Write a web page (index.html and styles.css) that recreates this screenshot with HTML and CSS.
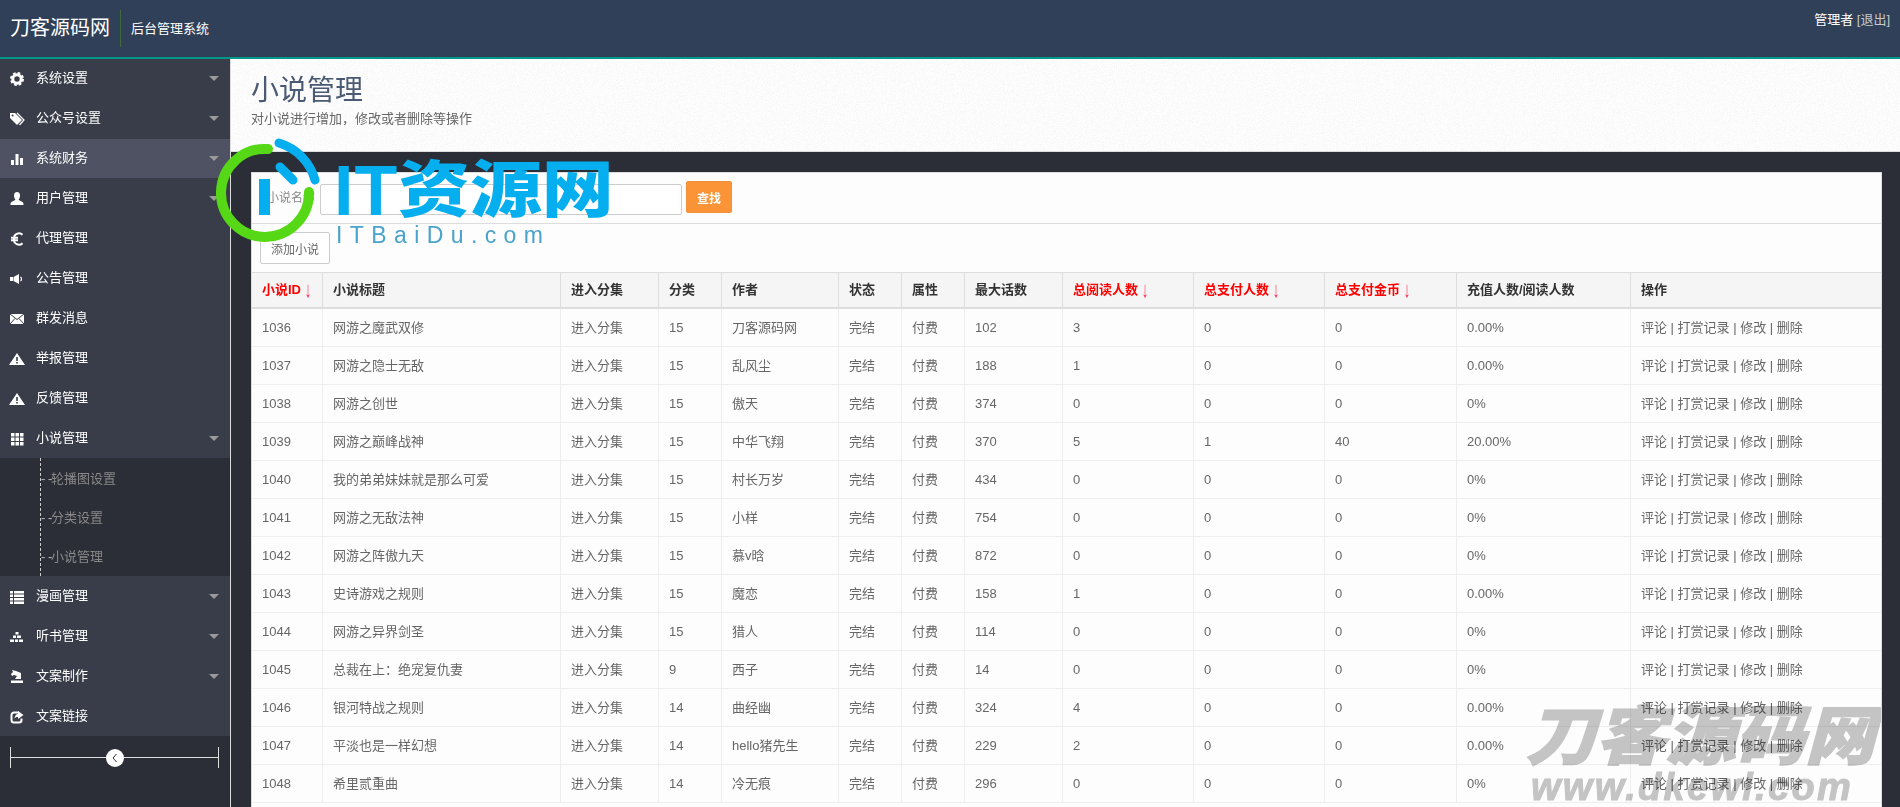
FILE: index.html
```html
<!DOCTYPE html>
<html lang="zh-CN">
<head>
<meta charset="utf-8">
<title>小说管理</title>
<link rel="stylesheet" href="styles.css">
</head>
<body>
<header class="topbar">
  <div class="brand">刀客源码网</div>
  <div class="system">后台管理系统</div>
  <div class="account">管理者 <a class="logout">[退出]</a></div>
</header>
<div class="layout">
  <aside class="sidebar">
    <nav>
      <a class="item"><svg class="ico" viewBox="0 0 14 14"><circle cx="7" cy="7" r="4.2" fill="none" stroke="#fff" stroke-width="3"/><circle cx="7" cy="7" r="6" fill="none" stroke="#fff" stroke-width="2" stroke-dasharray="2.7 2"/></svg><span>系统设置</span><i class="caret"></i></a>
      <a class="item"><svg class="ico" viewBox="0 0 14 14"><path d="M0 1h5l7 7-5 5-7-7z" fill="#fff"/><circle cx="2.6" cy="3.4" r="1" fill="#393c49"/><path d="M7 1l7 7-4.500 5" fill="none" stroke="#fff" stroke-width="1.200"/></svg><span>公众号设置</span><i class="caret"></i></a>
      <a class="item active"><svg class="ico" viewBox="0 0 14 14"><path d="M1 8h3v5H1zM5.500 2h3v11h-3zM10 6h3v7h-3z" fill="#fff"/></svg><span>系统财务</span><i class="caret"></i></a>
      <a class="item"><svg class="ico" viewBox="0 0 14 14"><path d="M7 0c2 0 3 1.500 3 3.500S9 7 8.500 8c2 1 5 1.500 5 4v1H.5v-1c0-2.500 3-3 5-4C5 7 4 5.500 4 3.500S5 0 7 0z" fill="#fff"/></svg><span>用户管理</span><i class="caret"></i></a>
      <a class="item"><svg class="ico" viewBox="0 0 14 14"><path d="M12.500 2.800A5 5 0 0 0 4 7a5 5 0 0 0 8.500 4.200M1 5.800h7M1 8.200h7" fill="none" stroke="#fff" stroke-width="2"/></svg><span>代理管理</span></a>
      <a class="item"><svg class="ico" viewBox="0 0 14 14"><path d="M0 5h3v4H0zM3.500 5L9 2v10L3.500 9z" fill="#fff"/><path d="M10.500 5a2.500 2.500 0 0 1 0 4" fill="none" stroke="#fff" stroke-width="1.200"/></svg><span>公告管理</span></a>
      <a class="item"><svg class="ico" viewBox="0 0 14 14"><path d="M0 2h14v10H0z" fill="#fff"/><path d="M0 2l7 5.500L14 2M0 12l5-5.500M14 12L9 6.500" fill="none" stroke="#393c49" stroke-width="1"/></svg><span>群发消息</span></a>
      <a class="item"><svg class="ico" viewBox="0 0 14 14"><path d="M7 1L15 13H-1z" fill="#fff"/><path d="M6.200 5h1.600v4H6.200zM6.200 10h1.600v1.500H6.200z" fill="#393c49"/></svg><span>举报管理</span></a>
      <a class="item"><svg class="ico" viewBox="0 0 14 14"><path d="M7 1L15 13H-1z" fill="#fff"/><path d="M6.200 5h1.600v4H6.200zM6.200 10h1.600v1.500H6.200z" fill="#393c49"/></svg><span>反馈管理</span></a>
      <a class="item"><svg class="ico" viewBox="0 0 14 14"><path d="M1 1h3.500v3.500H1zM5.500 1H9v3.500H5.500zM10 1h3.500v3.500H10zM1 5.500h3.500V9H1zM5.500 5.500H9V9H5.500zM10 5.500h3.500V9H10zM1 10h3.500v3.500H1zM5.500 10H9v3.500H5.500zM10 10h3.500v3.500H10z" fill="#fff"/></svg><span>小说管理</span><i class="caret"></i></a>
      <div class="sub">
        <a class="sub-item">轮播图设置</a>
        <a class="sub-item">分类设置</a>
        <a class="sub-item">小说管理</a>
      </div>
      <a class="item"><svg class="ico" viewBox="0 0 14 14"><path d="M0 1h3v2.500H0zM4 1h10v2.500H4zM0 4.500h3V7H0zM4 4.500h10V7H4zM0 8h3v2.500H0zM4 8h10v2.500H4zM0 11.500h3V14H0zM4 11.500h10V14H4z" fill="#fff"/></svg><span>漫画管理</span><i class="caret"></i></a>
      <a class="item"><svg class="ico" viewBox="0 0 14 14"><path d="M5.500 2h3v2.500h-3zM3 5.500h3V8H3zM7 5.500h4V8H7zM0 9.500h4V12H0zM5 9.500h3V12H5zM9 9.500h4V12H9z" fill="#fff"/></svg><span>听书管理</span><i class="caret"></i></a>
      <a class="item"><svg class="ico" viewBox="0 0 14 14"><path d="M2 0l4 1 5 2v6H5l2-3-3-1-2 1-1-2 2-2zM1 10.500h12V13H1z" fill="#fff"/></svg><span>文案制作</span><i class="caret"></i></a>
      <a class="item"><svg class="ico" viewBox="0 0 14 14"><path d="M9 2.500H4A2.500 2.500 0 0 0 1.500 5v5A2.500 2.500 0 0 0 4 12.500h5A2.500 2.500 0 0 0 11.500 10V8.500" fill="none" stroke="#fff" stroke-width="2"/><path d="M8 1l5.500 4L8 9V7c-2 0-3 .5-3.500 2 0-3 1.500-5 3.500-5z" fill="#fff"/></svg><span>文案链接</span></a>
    </nav>
    <div class="collapse"><span class="knob"><svg class="chev" viewBox="0 0 8 10"><path d="M5.500 1L2 5l3.500 4" fill="none" stroke="#333" stroke-width="1"/></svg></span></div>
  </aside>
  <main class="main">
    <div class="page-head">
      <svg class="noise" aria-hidden="true"><filter id="grain"><feTurbulence type="fractalNoise" baseFrequency="1.100" numOctaves="2"/><feColorMatrix values="0 0 0 0 0.5 0 0 0 0 0.5 0 0 0 0 0.5 0 0 0 0.3 -0.1"/></filter><rect width="100%" height="100%" filter="url(#grain)"/></svg>
      <h1 class="title">小说管理</h1>
      <p class="desc">对小说进行增加，修改或者删除等操作</p>
    </div>
    <section class="panel">
      <form class="search">
        <label class="field-label">小说名称</label>
        <input class="field" type="text">
        <button class="btn-find" type="button">查找</button>
      </form>
      <div class="tools"><button class="btn-add" type="button">添加小说</button></div>
      <table class="grid">
        <colgroup>
          <col class="c1"><col class="c2"><col class="c3"><col class="c4"><col class="c5"><col class="c6"><col class="c7"><col class="c8"><col class="c9"><col class="c10"><col class="c11"><col class="c12"><col class="c13">
        </colgroup>
        <thead>
          <tr><th class="sort">小说ID <em>↓</em></th><th>小说标题</th><th>进入分集</th><th>分类</th><th>作者</th><th>状态</th><th>属性</th><th>最大话数</th><th class="sort">总阅读人数 <em>↓</em></th><th class="sort">总支付人数 <em>↓</em></th><th class="sort">总支付金币 <em>↓</em></th><th>充值人数/阅读人数</th><th>操作</th></tr>
        </thead>
        <tbody>
          <tr><td>1036</td><td>网游之魔武双修</td><td>进入分集</td><td>15</td><td>刀客源码网</td><td>完结</td><td>付费</td><td>102</td><td>3</td><td>0</td><td>0</td><td>0.00%</td><td>评论 | 打赏记录 | 修改 | 删除</td></tr>
          <tr><td>1037</td><td>网游之隐士无敌</td><td>进入分集</td><td>15</td><td>乱风尘</td><td>完结</td><td>付费</td><td>188</td><td>1</td><td>0</td><td>0</td><td>0.00%</td><td>评论 | 打赏记录 | 修改 | 删除</td></tr>
          <tr><td>1038</td><td>网游之创世</td><td>进入分集</td><td>15</td><td>傲天</td><td>完结</td><td>付费</td><td>374</td><td>0</td><td>0</td><td>0</td><td>0%</td><td>评论 | 打赏记录 | 修改 | 删除</td></tr>
          <tr><td>1039</td><td>网游之巅峰战神</td><td>进入分集</td><td>15</td><td>中华飞翔</td><td>完结</td><td>付费</td><td>370</td><td>5</td><td>1</td><td>40</td><td>20.00%</td><td>评论 | 打赏记录 | 修改 | 删除</td></tr>
          <tr><td>1040</td><td>我的弟弟妹妹就是那么可爱</td><td>进入分集</td><td>15</td><td>村长万岁</td><td>完结</td><td>付费</td><td>434</td><td>0</td><td>0</td><td>0</td><td>0%</td><td>评论 | 打赏记录 | 修改 | 删除</td></tr>
          <tr><td>1041</td><td>网游之无敌法神</td><td>进入分集</td><td>15</td><td>小样</td><td>完结</td><td>付费</td><td>754</td><td>0</td><td>0</td><td>0</td><td>0%</td><td>评论 | 打赏记录 | 修改 | 删除</td></tr>
          <tr><td>1042</td><td>网游之阵傲九天</td><td>进入分集</td><td>15</td><td>慕v晗</td><td>完结</td><td>付费</td><td>872</td><td>0</td><td>0</td><td>0</td><td>0%</td><td>评论 | 打赏记录 | 修改 | 删除</td></tr>
          <tr><td>1043</td><td>史诗游戏之规则</td><td>进入分集</td><td>15</td><td>魔恋</td><td>完结</td><td>付费</td><td>158</td><td>1</td><td>0</td><td>0</td><td>0.00%</td><td>评论 | 打赏记录 | 修改 | 删除</td></tr>
          <tr><td>1044</td><td>网游之异界剑圣</td><td>进入分集</td><td>15</td><td>猎人</td><td>完结</td><td>付费</td><td>114</td><td>0</td><td>0</td><td>0</td><td>0%</td><td>评论 | 打赏记录 | 修改 | 删除</td></tr>
          <tr><td>1045</td><td>总裁在上：绝宠复仇妻</td><td>进入分集</td><td>9</td><td>西子</td><td>完结</td><td>付费</td><td>14</td><td>0</td><td>0</td><td>0</td><td>0%</td><td>评论 | 打赏记录 | 修改 | 删除</td></tr>
          <tr><td>1046</td><td>银河特战之规则</td><td>进入分集</td><td>14</td><td>曲经幽</td><td>完结</td><td>付费</td><td>324</td><td>4</td><td>0</td><td>0</td><td>0.00%</td><td>评论 | 打赏记录 | 修改 | 删除</td></tr>
          <tr><td>1047</td><td>平淡也是一样幻想</td><td>进入分集</td><td>14</td><td>hello猪先生</td><td>完结</td><td>付费</td><td>229</td><td>2</td><td>0</td><td>0</td><td>0.00%</td><td>评论 | 打赏记录 | 修改 | 删除</td></tr>
          <tr><td>1048</td><td>希里贰重曲</td><td>进入分集</td><td>14</td><td>冷无痕</td><td>完结</td><td>付费</td><td>296</td><td>0</td><td>0</td><td>0</td><td>0%</td><td>评论 | 打赏记录 | 修改 | 删除</td></tr>
        </tbody>
      </table>
      <div class="stamp">
        <div class="stamp-cn">刀客源码网</div>
        <div class="stamp-en">www.dkewl.com</div>
      </div>
    </section>
  </main>
</div>
<div class="logo">
  <svg class="logo-mark" viewBox="0 0 110 110">
    <path d="M50 9A44 44 0 1 0 91 52" fill="none" stroke="#56d816" stroke-width="10" stroke-linecap="round"/>
    <path d="M61 3A53 53 0 0 1 97 40" fill="none" stroke="#05aeee" stroke-width="9" stroke-linecap="round"/>
    <path d="M62 27L75 40" fill="none" stroke="#05aeee" stroke-width="9" stroke-linecap="round"/>
    <path d="M41 39h11v36H41z" fill="#05aeee"/>
  </svg>
  <div class="logo-text"><span class="logo-it">IT</span><span class="logo-cn">资源网</span></div>
  <div class="logo-en">ITBaiDu.com</div>
</div>
</body>
</html>
```
FILE: styles.css
```css
* { box-sizing: border-box; }
html, body { margin: 0; height: 100%; overflow: hidden; }
body {
  display: flex;
  flex-direction: column;
  background: #2b2e37;
  color: #666;
  font: 13px/1.4 "Liberation Sans", "Noto Sans CJK SC", sans-serif;
}
.topbar {
  position: relative;
  z-index: 2;
  flex: none;
  display: flex;
  height: 59px;
  background: #2f4058;
  border-bottom: 2px solid #009688;
  color: #fff;
}
.brand {
  margin-left: 10px;
  margin-top: 10px;
  height: 37px;
  padding-right: 10px;
  border-right: 1px solid #3f6a3a;
  font-size: 20px;
  line-height: 37px;
}
.system { margin: 10px 0 0 10px; line-height: 37px; }
.account { margin: 12px 10px 0 auto; line-height: 16px; }
.logout { color: #c9c9c9; }
.layout { flex: 1; display: flex; min-height: 0; }
.sidebar {
  flex: none;
  width: 231px;
  margin-top: -1px;
  background: #2b2e37;
  border-right: 1px solid #ddd;
}
.item {
  display: flex;
  align-items: center;
  height: 40px;
  padding: 0 11px 0 10px;
  background: #393c49;
  border-top: 1px solid #393c49;
  color: #fff;
}
.item.active { background: #4f5263; }
.ico { flex: none; width: 14px; height: 14px; margin-right: 12px; overflow: visible; }
.caret {
  margin-left: auto;
  border-top: 5px solid #9a9a9a;
  border-left: 5px solid transparent;
  border-right: 5px solid transparent;
}
.sub {
  height: 118px;
  padding-top: 1px;
  margin-left: 40px;
  border-left: 1px dashed #ccc;
}
.sub-item {
  display: block;
  height: 39px;
  line-height: 39px;
  color: #888;
}
.sub-item::before {
  content: "- -";
  display: inline-block;
  width: 10px;
  color: #bbb;
  letter-spacing: -.5px;
  white-space: nowrap;
}
.collapse {
  display: flex;
  justify-content: center;
  align-items: center;
  height: 21px;
  margin: 11px 11px 0 10px;
  border-left: 1px solid #ddd;
  border-right: 1px solid #ddd;
  background: linear-gradient(#ddd, #ddd) center / 100% 1px no-repeat;
}
.knob {
  display: flex;
  align-items: center;
  justify-content: center;
  width: 18px;
  height: 18px;
  border-radius: 50%;
  background: #fff;
}
.chev { width: 8px; height: 10px; }
.main { flex: 1; min-width: 0; display: flex; flex-direction: column; }
.page-head {
  position: relative;
  flex: none;
  height: 93px;
  padding: 15px 20px 0;
  background: #fff;
  border-bottom: 1px solid #ddd;
}
.noise { position: absolute; inset: 0; width: 100%; height: 100%; }
.title {
  position: relative;
  margin: 0;
  font-size: 28px;
  font-weight: 400;
  line-height: 34px;
  color: #4a5a72;
}
.desc { position: relative; margin: 1px 0 0; line-height: 20px; color: #666; }
.panel {
  position: relative;
  flex: 1;
  min-height: 0;
  margin: 20px 18px 0 20px;
  overflow: hidden;
  background: #fdfdfd;
  border: 1px solid #ddd;
  border-bottom: 0;
}
.search {
  display: flex;
  align-items: center;
  height: 51px;
  padding: 0 10px 0 15px;
  border-bottom: 1px solid #ddd;
}
.field-label { width: 53px; color: #888; font-size: 12px; }
.field {
  width: 362px;
  height: 31px;
  margin-top: 2px;
  border: 1px solid #ccc;
  border-radius: 2px;
  background: #fff;
}
.btn-find {
  width: 46px;
  height: 32px;
  margin: -2px 0 0 4px;
  padding: 0;
  border: 1px solid #f0913a;
  border-radius: 2px;
  background: #fb9337;
  color: #fff;
  font: bold 12px "Liberation Sans", "Noto Sans CJK SC", sans-serif;
}
.tools { height: 48px; padding: 8px; }
.btn-add {
  width: 70px;
  height: 32px;
  padding: 0;
  border: 1px solid #ccc;
  border-radius: 2px;
  background: #fff;
  color: #666;
  font: 12px "Liberation Sans", "Noto Sans CJK SC", sans-serif;
}
.grid { width: 100%; table-layout: fixed; border-collapse: separate; border-spacing: 0; }
.c1 { width: 71px; } .c2 { width: 238px; } .c3 { width: 98px; } .c4 { width: 63px; }
.c5 { width: 117px; } .c6 { width: 63px; } .c7 { width: 63px; } .c8 { width: 98px; }
.c9 { width: 131px; } .c10 { width: 131px; } .c11 { width: 132px; } .c12 { width: 174px; }
.c13 { width: 250px; }
.grid th {
  height: 37px;
  padding: 0 10px;
  background: #f5f5f5;
  border-top: 1px solid #ddd;
  border-right: 1px solid #ddd;
  border-bottom: 2px solid #ddd;
  color: #333;
  font-weight: bold;
  text-align: left;
}
.grid th:last-child, .grid td:last-child { border-right: 0; }
.grid th.sort { color: #f00; }
.grid th em {
  display: inline-block;
  font-style: normal;
  font-weight: 400;
  color: #ff2a55;
  transform: scaleY(1.7);
}
.grid td {
  height: 38px;
  padding: 1px 10px 0;
  border-right: 1px solid #eee;
  border-bottom: 1px solid #eee;
  white-space: nowrap;
}
.stamp {
  position: absolute;
  top: 529px;
  right: 0;
  width: 354px;
  color: #c6c6c6;
  font-weight: 900;
  mix-blend-mode: multiply;
  pointer-events: none;
}
.stamp-cn {
  margin-left: 5px;
  font-size: 64px;
  line-height: 70px;
  white-space: nowrap;
  -webkit-text-stroke: 1.500px #c6c6c6;
  transform-origin: 0 50%;
  transform: scaleX(1.09) skewX(-14deg);
}
.stamp-en {
  margin-top: -4px;
  margin-left: 4px;
  font-size: 38px;
  font-style: italic;
  line-height: 38px;
  letter-spacing: 2.3px;
  white-space: nowrap;
  -webkit-text-stroke: 1px #c6c6c6;
}
.logo {
  position: absolute;
  left: 212px;
  top: 136px;
  width: 400px;
  height: 110px;
  pointer-events: none;
}
.logo-mark { position: absolute; left: 6px; top: 4px; width: 110px; height: 110px; overflow: visible; }
.logo-text {
  position: absolute;
  left: 122px;
  top: 19px;
  display: flex;
  align-items: center;
  height: 72px;
  color: #05aeee;
  font-weight: 900;
  white-space: nowrap;
}
.logo-it { font-size: 70px; line-height: 72px; letter-spacing: 1px; }
.logo-cn {
  display: block;
  font-size: 62px;
  line-height: 72px;
  transform-origin: 0 50%;
  transform: scaleX(1.16);
}
.logo-en {
  position: absolute;
  left: 124px;
  top: 84px;
  color: #4aa3cc;
  font-size: 23px;
  line-height: 30px;
  letter-spacing: 7.4px;
  white-space: nowrap;
}
```
